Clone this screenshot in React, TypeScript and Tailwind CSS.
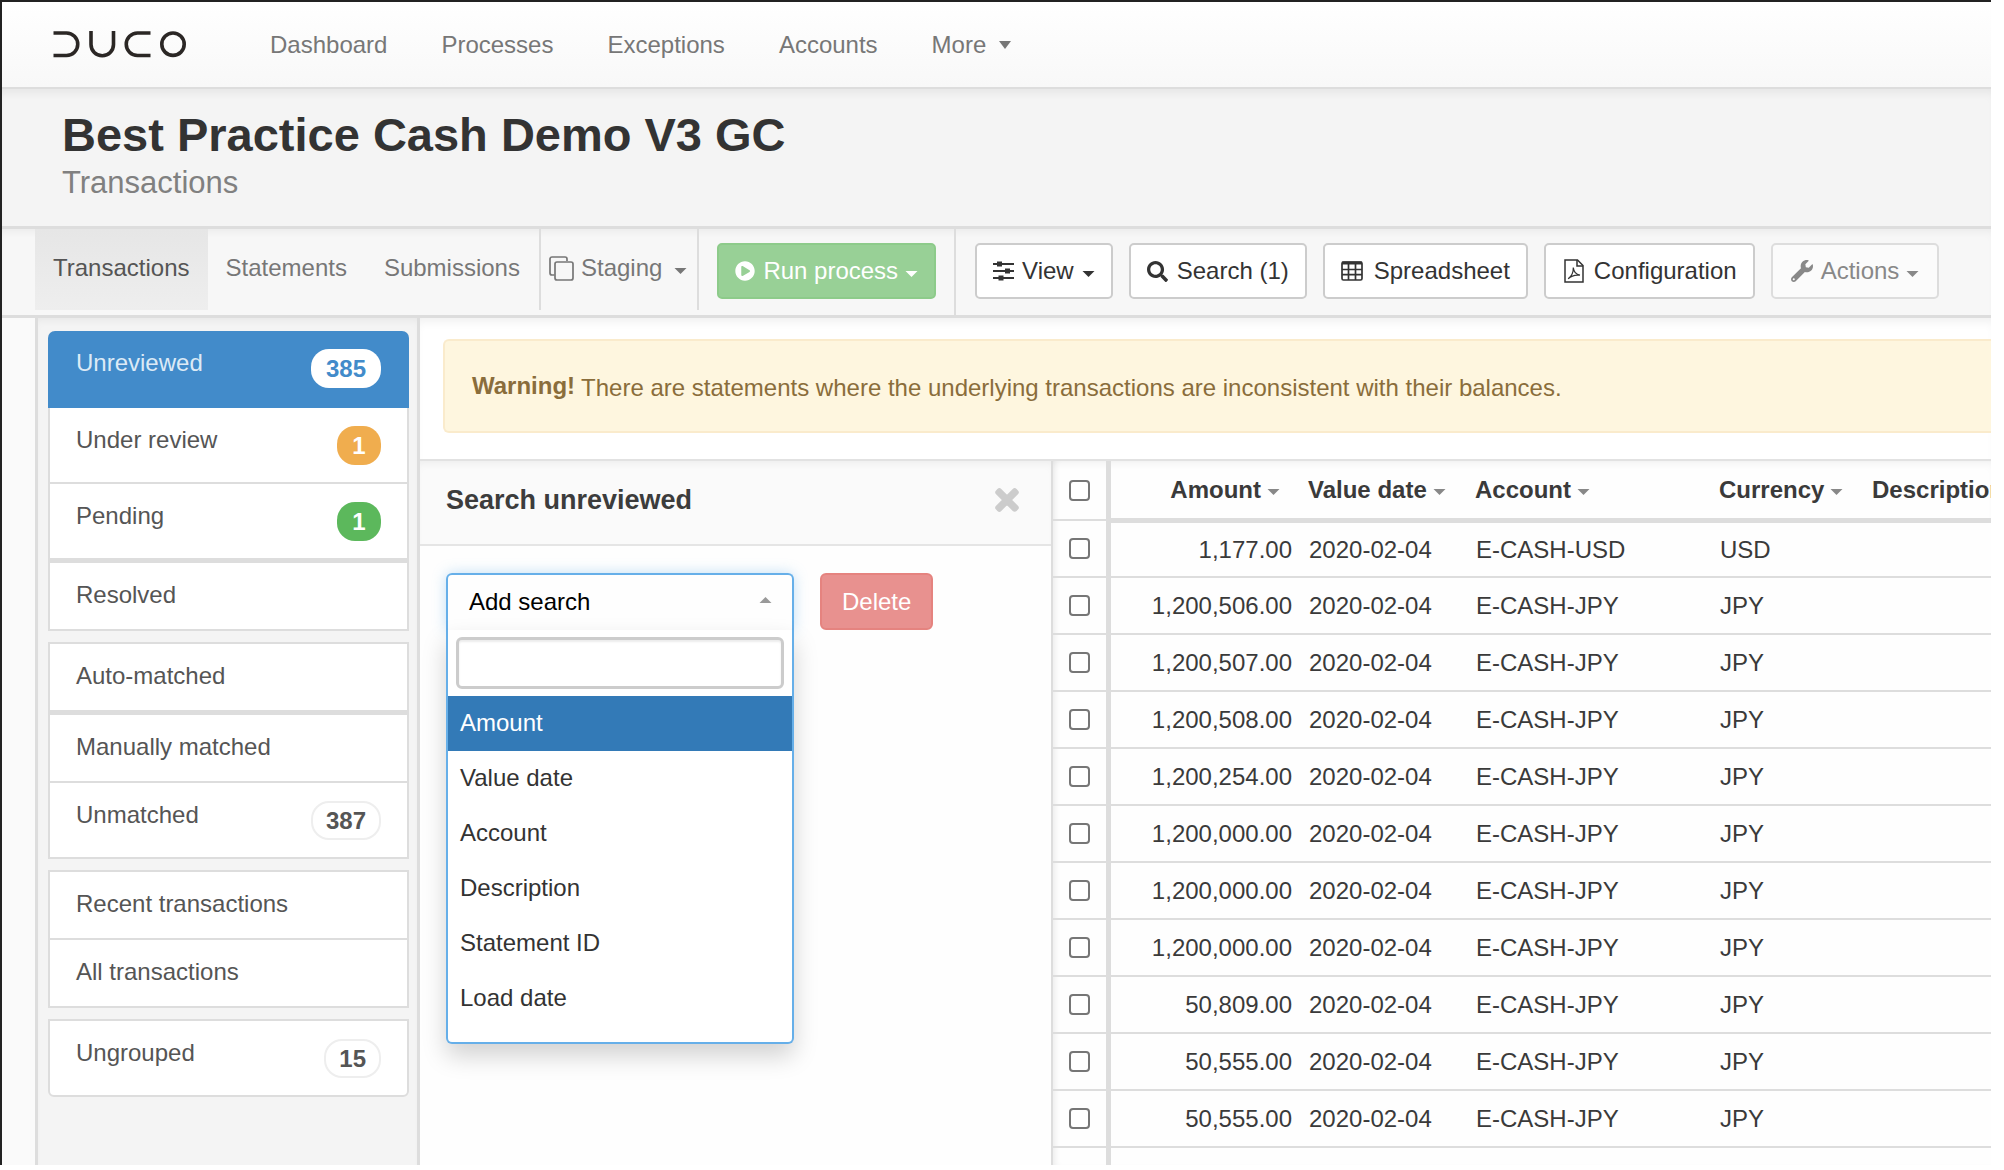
import clsx from 'clsx';
import { useState } from 'react';
import { FaPlayCircle, FaSearch, FaTimes, FaWrench } from 'react-icons/fa';

type SidebarItem = {
    label: string;
    count?: number;
    badge?: string;
    active?: boolean;
    thick?: boolean;
};

type Transaction = {
    amount: string;
    date: string;
    account: string;
    currency: string;
};

const navLinks = ['Dashboard', 'Processes', 'Exceptions', 'Accounts'];

const sidebarGroups: SidebarItem[][] = [
    [
        { label: 'Unreviewed', count: 385, badge: 'bg-white text-[#428bca]', active: true },
        { label: 'Under review', count: 1, badge: 'bg-[#f0ad4e] text-white' },
        { label: 'Pending', count: 1, badge: 'bg-[#5cb85c] text-white', thick: true },
        { label: 'Resolved' },
    ],
    [
        { label: 'Auto-matched', thick: true },
        { label: 'Manually matched' },
        { label: 'Unmatched', count: 387, badge: 'border-2 border-[#eee] text-[#555]' },
    ],
    [{ label: 'Recent transactions' }, { label: 'All transactions' }],
    [{ label: 'Ungrouped', count: 15, badge: 'border-2 border-[#eee] text-[#555]' }],
];

const searchFields = ['Amount', 'Value date', 'Account', 'Description', 'Statement ID', 'Load date'];

const jpy = (amount: string): Transaction => ({
    amount,
    date: '2020-02-04',
    account: 'E-CASH-JPY',
    currency: 'JPY',
});

const transactions: Transaction[] = [
    { amount: '1,177.00', date: '2020-02-04', account: 'E-CASH-USD', currency: 'USD' },
    jpy('1,200,506.00'),
    jpy('1,200,507.00'),
    jpy('1,200,508.00'),
    jpy('1,200,254.00'),
    jpy('1,200,000.00'),
    jpy('1,200,000.00'),
    jpy('1,200,000.00'),
    jpy('50,809.00'),
    jpy('50,555.00'),
    jpy('50,555.00'),
];

const Caret = ({ className }: { className?: string }) => (
    <svg viewBox="0 0 14 7" className={clsx('h-[6px] w-[13px] shrink-0', className)} fill="currentColor" aria-hidden="true">
        <path d="M0 0h14L7 7z" />
    </svg>
);

const Logo = () => (
    <svg viewBox="0 0 134 28" className="h-7 w-[134px]" fill="none" stroke="#2b2725" strokeWidth="3.6" aria-label="Duco" role="img">
        <path d="M0.500 2H13.500a11 11 0 0 1 0 22.500H0.500" />
        <path d="M38 0v13.500a11 11 0 0 0 22.500 0V0" />
        <path d="M97.500 2H84.500a11 11 0 0 0 0 22.500H97.500" />
        <circle cx="120" cy="13.200" r="11.200" />
    </svg>
);

const CopyIcon = () => (
    <svg viewBox="0 0 25 25" className="size-[25px]" fill="none" stroke="currentColor" strokeWidth="1.7" aria-hidden="true">
        <path d="M5.500 19H3a2 2 0 0 1-2-2V3a2 2 0 0 1 2-2h13a2 2 0 0 1 2 2v2" />
        <rect x="6" y="6" width="18" height="18" rx="2" />
    </svg>
);

const SlidersIcon = () => (
    <svg viewBox="0 0 21 20" className="h-5 w-[21px]" fill="currentColor" aria-hidden="true">
        <path d="M0 2h21v2H0zM0 9h21v2H0zM0 16h21v2H0z" />
        <path d="M4 0.500h5v5H4zM12 7.500h5v5h-5zM5.500 14.500h5v5h-5z" />
    </svg>
);

const TableIcon = () => (
    <svg viewBox="0 0 22 20" className="h-5 w-[22px]" fill="none" stroke="currentColor" strokeWidth="1.700" aria-hidden="true">
        <rect x="1" y="1" width="20" height="18" rx="1.500" />
        <path d="M1 2h20" strokeWidth="3" />
        <path d="M1 8.500h20M1 13.700h20M7.500 2v17M14.500 2v17" />
    </svg>
);

const PdfIcon = () => (
    <svg viewBox="0 0 20 24" className="h-6 w-5" fill="none" stroke="currentColor" strokeWidth="1.500" aria-hidden="true">
        <path d="M1 1h12.500L19 6.500V23H1z" />
        <path d="M13 1v6h6" />
        <path d="M9.300 8.500c.4 4.200 2 6.800 6.700 7.700-4.500-.6-8.400.2-11.800 3.600 3-2.300 5.300-6 5.100-11.300z" strokeWidth="1.200" />
    </svg>
);

const toolButton = 'flex items-center rounded-[5px] border-2 border-[#ccc] bg-white px-4 py-[9px] leading-[34px] text-[#333]';

const Navbar = () => (
    <nav className="flex items-center border-b-2 border-[#ddd] bg-linear-to-b from-white to-[#f8f8f8] pt-[26px] pb-[25px] pl-[51px] leading-[34px] text-[#777]">
        <a href="#home" className="mr-[56px]"><Logo /></a>
        {navLinks.map((link) => (
            <a key={link} href={`#${link.toLowerCase()}`} className="px-[27px]">{link}</a>
        ))}
        <a href="#more" className="flex items-center gap-[13px] px-[27px]">
            More
            <svg viewBox="0 0 12 8" className="h-2 w-3" fill="currentColor" aria-hidden="true"><path d="M0 0h12L6 8z" /></svg>
        </a>
    </nav>
);

const Toolbar = () => (
    <div className="flex border-b-[3px] border-[#ddd] bg-[#f7f7f7] pl-[33px] leading-[34px] text-[#777] shadow-[inset_0_6px_8px_-4px_rgba(0,0,0,0.06)]">
        <div className="mb-[5px] flex">
            <a href="#transactions" className="bg-linear-to-b from-[#e6e6e6] to-[#eee] px-[18px] pt-[22px] pb-[25px] text-[#555]">Transactions</a>
            <a href="#statements" className="px-[18px] pt-[22px] pb-[25px]">Statements</a>
            <a href="#submissions" className="px-[19px] pt-[22px] pb-[25px]">Submissions</a>
            <a href="#staging" className="flex items-center gap-[7px] border-x-2 border-[#ddd] pt-[22px] pr-[10px] pb-[25px] pl-2">
                <CopyIcon />
                Staging
                <Caret className="mt-[5px] ml-[5px]" />
            </a>
        </div>
        <div className="flex items-start border-r-2 border-[#ddd] px-[18px] pt-[14px] pb-[16px]">
            <button className="flex items-center rounded-[5px] border-2 border-[#8dcb8a] bg-[#98d096] px-4 py-[9px] text-white">
                <FaPlayCircle className="mr-2 size-5" />
                Run process
                <Caret className="mt-[6px] ml-[7px]" />
            </button>
        </div>
        <div className="flex items-start gap-4 px-[19px] pt-[14px] pb-[16px]">
            <button className={toolButton}>
                <span className="mr-2"><SlidersIcon /></span>
                View
                <Caret className="mt-[6px] ml-2" />
            </button>
            <button className={toolButton}>
                <FaSearch className="mr-[9px] size-[21px]" />
                Search (1)
            </button>
            <button className={toolButton}>
                <span className="mr-[11px]"><TableIcon /></span>
                Spreadsheet
            </button>
            <button className={toolButton}>
                <span className="mx-[2px] mr-[10px]"><PdfIcon /></span>
                Configuration
            </button>
            <button className="flex items-center rounded-[5px] border-2 border-[#ddd] bg-[#fbfbfb] px-[18px] py-[9px] text-[#888]">
                <FaWrench className="mr-2 size-[22px]" />
                Actions
                <Caret className="mt-[6px] ml-[7px]" />
            </button>
        </div>
    </div>
);

const Sidebar = () => (
    <aside className="flex w-[385px] shrink-0 flex-col gap-[11px] border-x-[3px] border-[#ddd] bg-[#f4f4f4] pt-[13px] pr-2 pl-[10px] leading-[34px] text-[#555] shadow-[inset_0_6px_8px_-4px_rgba(0,0,0,0.06)]">
        {sidebarGroups.map((group, g) => (
            <ul
                key={g}
                className={clsx(
                    'border-2 border-[#ddd] bg-white',
                    g === 0 && 'rounded-t-[7px] border-t-0',
                    g === sidebarGroups.length - 1 && 'rounded-b-[6px]'
                )}
            >
                {group.map((item, i) => (
                    <li
                        key={item.label}
                        className={clsx(
                            'border-[#ddd]',
                            !item.active && i < group.length - 1 && (item.thick ? 'border-b-[5px]' : 'border-b-2')
                        )}
                    >
                        <a
                            href={`#${item.label}`}
                            className={clsx(
                                'flex items-start justify-between pt-[15px]',
                                item.active
                                    ? '-mx-[2px] rounded-t-[7px] bg-[#428bca] px-[28px] pb-[20px] text-[#dceaf6]'
                                    : 'px-[26px] pb-[17px]'
                            )}
                        >
                            {item.label}
                            {item.count && (
                                <span className={clsx('mt-[3px] flex h-[39px] min-w-[44px] items-center justify-center rounded-[18px] font-bold', item.badge, item.count > 9 && (item.badge?.includes('border') ? 'px-[13px]' : 'px-[15px]'))}>
                                    {item.count}
                                </span>
                            )}
                        </a>
                    </li>
                ))}
            </ul>
        ))}
    </aside>
);

const SearchPanel = () => {
    const [selected, setSelected] = useState('Amount');

    return (
        <section className="w-[631px] shrink-0 bg-[#fefefe]">
            <div className="flex items-center justify-between border-b-2 border-[#e5e5e5] bg-[#fafafa] pt-[22px] pr-[28px] pb-[27px] pl-[26px] shadow-[inset_0_6px_8px_-4px_rgba(0,0,0,0.06)]">
                <h2 className="text-[27px] leading-[34px] font-bold text-[#3c3c3c]">Search unreviewed</h2>
                <button aria-label="Close search" className="text-[#ccc]"><FaTimes className="size-[32px]" stroke="currentColor" strokeWidth="24" /></button>
            </div>

            <div className="flex items-start gap-[26px] pt-[27px] pl-[26px] leading-[34px]">
                <div className="relative w-[348px]">
                    <button aria-expanded="true" className="flex w-full items-center justify-between rounded-t-[6px] border-2 border-b-0 border-[#66afe9] pt-[10px] pr-[19px] pb-[11px] pl-[21px] text-black shadow-[0_0_14px_rgba(102,175,233,0.4)]">
                        Add search
                        <Caret className="mb-1 w-[15px] rotate-180 text-[#999]" />
                    </button>
                    <div className="absolute inset-x-0 top-full rounded-b-[6px] border-2 border-t-0 border-[#66afe9] bg-white pt-[7px] pb-4 shadow-[0_12px_24px_rgba(0,0,0,0.175)]">
                        <input aria-label="Filter fields" type="text" className="mx-2 mb-[7px] block h-[52px] w-[328px] rounded-[6px] border-[3px] border-[#ccc] px-2 shadow-[inset_0_2px_2px_rgba(0,0,0,0.075)] outline-none" />
                        <ul role="listbox" aria-label="Search fields">
                            {searchFields.map((field) => (
                                <li
                                    key={field}
                                    role="option"
                                    aria-selected={field === selected}
                                    onClick={() => setSelected(field)}
                                    className={clsx('px-3 pt-[10px] pb-[11px]', field === selected ? 'bg-[#337ab7] text-white' : 'text-[#333]')}
                                >
                                    {field}
                                </li>
                            ))}
                        </ul>
                    </div>
                </div>
                <button className="rounded-[6px] border-2 border-[#e5837f] bg-[#e8918f] px-5 pt-[10px] pb-[9px] text-white">Delete</button>
            </div>
        </section>
    );
};

const TransactionTable = () => (
    <div className="min-w-0 flex-1 overflow-hidden border-l-2 border-[#ddd] bg-[#fefefe] shadow-[inset_6px_0_6px_-4px_rgba(0,0,0,0.08)]">
        <table className="w-full table-fixed border-separate border-spacing-0 text-left leading-[34px] text-[#3a3a3a]">
            <colgroup>
                <col className="w-[58px]" />
                <col className="w-[189px]" />
                <col className="w-[167px]" />
                <col className="w-[244px]" />
                <col className="w-[153px]" />
                <col />
            </colgroup>
            <thead>
                <tr className="shadow-[inset_0_6px_8px_-4px_rgba(0,0,0,0.06)]">
                    <th className="h-[60px] border-r-[5px] border-b-2 border-[#ddd] pl-4">
                        <input type="checkbox" aria-label="Select all" className="block size-[21px] appearance-none rounded-[4px] border-2 border-[#767676] bg-white" />
                    </th>
                    {['Amount', 'Value date', 'Account', 'Currency', 'Description'].map((title, i) => (
                        <th key={title} className="border-b-[3px] border-[#ddd] p-0 pl-2 whitespace-nowrap">
                            <span className={clsx('flex items-center gap-[6px]', i === 0 && 'justify-end pr-5')}>
                                {title}
                                {title !== 'Description' && <Caret className="mt-1 h-[5px] w-3 text-[#888]" />}
                            </span>
                        </th>
                    ))}
                </tr>
            </thead>
            <tbody>
                {transactions.map((row, i) => {
                    const cell = clsx('border-b-2 border-[#ddd] p-0 pl-[9px]', i === 0 && 'border-t-2');
                    return (
                        <tr key={i}>
                            <td className="h-[57px] border-r-[5px] border-b-2 border-[#ddd] p-0 pl-4">
                                <input type="checkbox" aria-label={`Select transaction ${i + 1}`} className="block size-[21px] appearance-none rounded-[4px] border-2 border-[#767676] bg-white" />
                            </td>
                            <td className={clsx(cell, 'pr-2 text-right')}>{row.amount}</td>
                            <td className={cell}>{row.date}</td>
                            <td className={cell}>{row.account}</td>
                            <td className={cell}>{row.currency}</td>
                            <td className={cell} />
                        </tr>
                    );
                })}
                <tr>
                    <td className="h-[57px] border-r-[5px] border-[#ddd]" />
                    <td colSpan={5} />
                </tr>
            </tbody>
        </table>
    </div>
);

const App = () => (
    <div className="h-screen overflow-hidden bg-white pr-[13px] pb-[5px] font-['Liberation_Sans',Arial,sans-serif] text-[24px]">
        <div className="flex h-full flex-col overflow-hidden border-t-2 border-l-2 border-[#222] bg-[#fafafa]">
            <Navbar />
            <header className="border-b-[3px] border-[#ddd] bg-[#f4f4f4] pt-[18px] pb-[24px] pl-[60px] shadow-[inset_0_8px_8px_-4px_rgba(0,0,0,0.06)]">
                <h1 className="text-[47px] leading-[56px] font-bold text-[#333]">Best Practice Cash Demo V3 GC</h1>
                <p className="pt-px text-[31px] leading-[38px] text-[#808080]">Transactions</p>
            </header>
            <Toolbar />
            <div className="flex min-h-0 flex-1 pl-[33px]">
                <Sidebar />
                <main className="flex min-w-0 flex-1 flex-col bg-white shadow-[inset_0_8px_10px_-4px_rgba(0,0,0,0.06)]">
                    <div role="alert" className="mt-[21px] mb-[26px] ml-[23px] flex items-center gap-[6px] rounded-l-[6px] border-2 border-r-0 border-[#faebcc] bg-[#fef6df] pt-[28px] pb-[24px] pl-[27px] leading-[34px] text-[#8a6d3b]">
                        <strong className="pb-1">Warning!</strong>
                        There are statements where the underlying transactions are inconsistent with their balances.
                    </div>
                    <div className="flex min-h-0 flex-1 border-t-2 border-[#e2e2e2]">
                        <SearchPanel />
                        <TransactionTable />
                    </div>
                </main>
            </div>
        </div>
    </div>
);

export default App;
